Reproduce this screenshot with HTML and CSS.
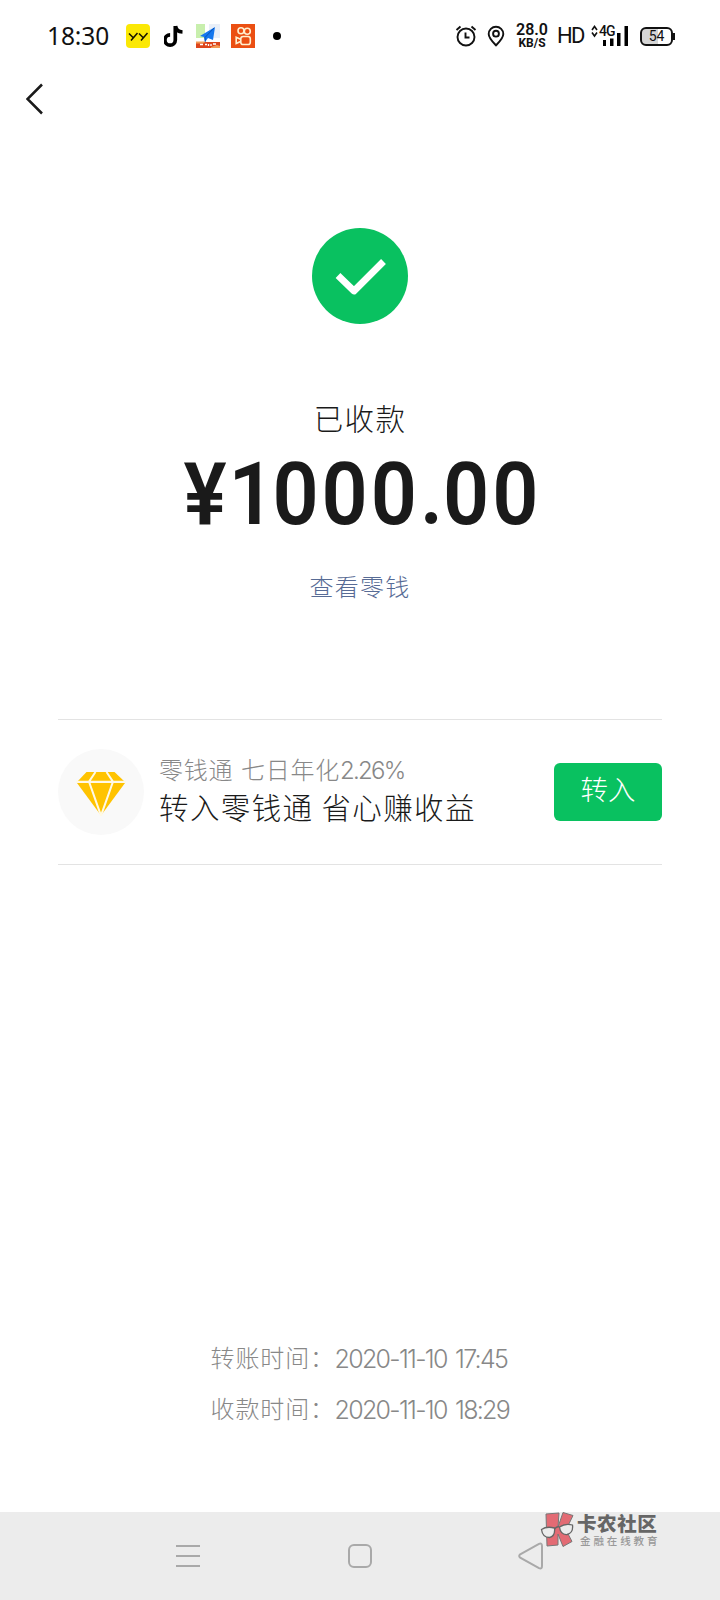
FILE: index.html
```html
<!DOCTYPE html>
<html lang="zh-CN">
<head>
<meta charset="utf-8">
<title>已收款</title>
<link rel="stylesheet" href="styles.css">
</head>
<body>
<div class="screen">
  <header class="status">
    <span class="clock">18:30</span>
    <div class="apps">
      <svg width="24" height="24" viewBox="0 0 24 24"><rect width="24" height="24" rx="4" fill="#fbe805"/><path d="M3 9.500l4 4M11.500 9l-6.500 7.500M13 9.500l4 4M21.500 9L15 16.500" fill="none" stroke="#151300" stroke-width="1.500"/></svg>
      <svg width="20" height="24" viewBox="0 0 20 24"><path d="M11.300 2v14a5.200 5.200 0 1 1-5.200-5.200M11.500 2c.5 4 3 5.800 7 6" fill="none" stroke="#000" stroke-width="3.700"/></svg>
      <svg width="24" height="24" viewBox="0 0 24 24"><path fill="#e9eff8" d="M0 0h24v24H0z"/><path fill="#c8efad" d="M0 0h9v15H0z"/><path fill="#fff" d="M9 0h4v18H9zM0 14h24v4H0z"/><path fill="#dd451c" d="M0 18h24v6H0z"/><path fill="#f39a54" d="M0 17.500h10l-3 2H0zM15 23l6-2 3 1v2h-9z"/><path fill="#1477ee" d="M19 3l-2 13-5-2-3 4-1-5-4-1z"/><path d="M18 4l-9 9.500.3 4" fill="none" stroke="#0752ba"/><path d="M4 20.500h3M9 20.500h2M12.500 20v2M15 20v2M17 20h3" stroke="#fff" stroke-width="1.300"/></svg>
      <svg width="24" height="24" viewBox="0 0 24 24"><path fill="#eb4f12" d="M0 0h24v24H0z"/><g fill="none" stroke="#fff0d0" stroke-width="1.600"><circle cx="10" cy="6.800" r="3"/><circle cx="16.300" cy="7.200" r="3"/><rect x="9.800" y="12.500" width="9.500" height="8" rx="2.300"/><path d="M9.500 15.200l-4.300-2v6.300l4.300-2"/></g></svg>
      <span class="dot"></span>
    </div>
    <div class="system">
      <svg width="22" height="22" viewBox="0 0 22 22" fill="none" stroke="#111" stroke-width="1.900"><circle cx="11" cy="12" r="8.500"/><path d="M10.500 7.500v5h4M1.500 5l4-3.500M16.500 1.500l4 3.500"/></svg>
      <svg class="pin" width="18" height="22" viewBox="0 0 18 22" fill="none" stroke="#111" stroke-width="1.900"><path d="M9 20.300C6 17.200 1.700 13.200 1.700 9a7.300 7.300 0 0 1 14.600 0c0 4.200-4.300 8.200-7.300 11.300z"/><circle cx="9" cy="8.700" r="2.900"/></svg>
      <div class="speed"><b>28.0</b><small>KB/S</small></div>
      <span class="hd">HD</span>
      <div class="signal">
        <svg width="38" height="22" viewBox="0 0 38 22"><path d="M1 5l2.500-3.500L6 5M1 7.500L3.500 11 6 7.500" fill="none" stroke="#111" stroke-width="1.600"/><path d="M12 15h3v6h-3zM19 13.500h3.500V21H19zM26 8h3.500v13H26zM33.500 1H37v20h-3.500z" fill="#000"/></svg>
        <span class="gen">4G</span>
      </div>
      <div class="battery"><span>54</span></div>
    </div>
  </header>
  <nav class="topbar">
    <svg width="18" height="32" viewBox="0 0 18 32"><path d="M16 1.500L1.500 16 16 30.500" fill="none" stroke="#1a1a1a" stroke-width="2.500"/></svg>
  </nav>
  <main class="main">
    <svg class="success" width="96" height="96" viewBox="0 0 96 96"><circle cx="48" cy="48" r="48" fill="#09c160"/><path d="M26 47.500L42 63 71.500 33.500" fill="none" stroke="#fff" stroke-width="6.800" stroke-linejoin="round"/></svg>
    <h1 class="state">已收款</h1>
    <div class="amount"><span class="yen">¥</span><span class="one">1</span>000<span class="point">.</span>00</div>
    <a class="balance">查看零钱</a>
    <section class="promo">
      <div class="gem"><svg width="50" height="44" viewBox="0 0 50 44"><path d="M10.500 0h28L49 10H1z" fill="#ffc300"/><path d="M1 11h48L25 43.500z" fill="#ffc300"/><path d="M0 9.700h50M19.500 0L13 9.700l12 34 12-34L30.500 0" fill="none" stroke="#fff9e5" stroke-width="2"/></svg></div>
      <div class="promo-text"><p class="rate">零钱通 七日年化<span class="num">2.26%</span></p><p class="pitch">转入零钱通 省心赚收益</p></div>
      <button class="transfer">转入</button>
    </section>
    <dl class="times">
      <div><dt>转账时间：</dt><dd>2020-11-10 17:45</dd></div>
      <div><dt>收款时间：</dt><dd>2020-11-10 18:29</dd></div>
    </dl>
  </main>
  <footer class="navbar">
    <svg width="24" height="24" viewBox="0 0 24 24"><path d="M0 2h24M0 12h24M0 22h24" stroke="#a9a9a9" stroke-width="2"/></svg>
    <svg class="home" width="24" height="24" viewBox="0 0 24 24"><rect x="1" y="1" width="22" height="22" rx="5" fill="none" stroke="#a9a9a9" stroke-width="2"/></svg>
    <svg class="back" width="26" height="28" viewBox="0 0 26 28"><path d="M2.200 12.300L21 1.800Q24 .5 24 4v20q0 3.500-3 2.200L2.200 15.700q-2-1.700 0-3.400z" fill="none" stroke="#a9a9a9" stroke-width="2"/></svg>
    <div class="brand">
      <svg width="36" height="38" viewBox="0 0 36 38"><path d="M6 2l13-1-1 14 5-14.500 10 3L26 18l6 11.500-9 5L18 22v11l-11 1z" fill="#e36b74" stroke="#777" stroke-width="1"/><path d="M1.500 17.500q5-3.500 13-1.500 1 8-5 9.500-7 0-8-8zM19.500 15q6-4 13-2 1 8-5.500 9.500-6.500.5-7.500-7.500z" fill="#ececec" stroke="#666" stroke-width="1.300"/><path d="M14.500 17q2.500-3 5-2" stroke="#666" stroke-width="1.300" fill="none"/></svg>
      <div><div class="brand-name">卡农社区</div><div class="brand-sub">金融在线教育</div></div>
    </div>
  </footer>
</div>
</body>
</html>
```
FILE: styles.css
```css
* { box-sizing: border-box; }
body, h1, p, dl, dd { margin: 0; }
body { background: #fff; color: #1a1a1a; font-family: "Noto Sans CJK SC", sans-serif; font-weight: 300; }
svg { display: block; flex: none; }
.screen { width: 720px; height: 1600px; display: flex; flex-direction: column; overflow: hidden; }
.status { height: 72px; padding: 0 46px 0 47px; display: flex; align-items: center; color: #111; }
.clock { width: 79px; font: 400 24.5px/36px "Noto Sans", sans-serif; letter-spacing: -.1px; }
.apps { display: flex; align-items: center; }
.apps svg:nth-child(2) { margin: 0 12px 0 14px; }
.apps svg:nth-child(4) { margin: 0 18px 0 11px; }
.dot { width: 8px; height: 8px; border-radius: 50%; background: #000; }
.system { display: flex; align-items: center; margin-left: auto; }
.pin { margin: 0 11px 0 10px; }
.speed { width: 32px; font-family: Roboto, sans-serif; font-weight: 700; text-align: center; }
.speed b, .speed small { display: block; white-space: nowrap; }
.speed b { font-size: 16px; line-height: 14px; font-weight: 600; }
.speed small { font-size: 12px; line-height: 12px; }
.hd { margin: 0 4px 0 8px; width: 31px; font: 400 22px/30px Roboto, sans-serif; letter-spacing: -1.800px; padding-left: 1px; }
.signal { position: relative; width: 38px; }
.gen { position: absolute; left: 8px; top: -1px; font: 500 14px/14px Roboto, sans-serif; letter-spacing: -1px; }
.battery { width: 33px; height: 19px; margin: 0 1px 0 11px; border: 2px solid #111; border-radius: 6px; background: linear-gradient(90deg, #d5d5d5 54%, #fff 54%); font: 400 14px/15px Roboto, sans-serif; text-align: center; position: relative; }
.battery::after { content: ""; position: absolute; right: -4px; top: 4px; width: 2px; height: 7px; background: #111; }
.topbar { height: 56px; padding: 11px 26px; }
.main { flex: 1; display: flex; flex-direction: column; align-items: center; padding-top: 100px; }
.state { margin-top: 71px; font-size: 29.500px; line-height: 44px; font-weight: 300; letter-spacing: 1.300px; }
.amount { margin: 12px 0 0 4px; height: 86px; font: 600 87px/86px Roboto, sans-serif; white-space: nowrap; letter-spacing: 3.200px; transform: scaleX(.93); }
.yen { letter-spacing: 2px; }
.one { letter-spacing: -2.500px; }
.point { letter-spacing: 0; }
.balance { margin-top: 31px; color: #576b95; font-size: 24px; line-height: 36px; letter-spacing: 1.200px; }
.promo { width: 604px; height: 146px; margin-top: 115px; border: solid #e3e3e3; border-width: 1px 0; display: flex; align-items: center; }
.gem { width: 86px; height: 86px; padding-top: 4px; flex: none; border-radius: 50%; background: #f9f9f9; display: flex; align-items: center; justify-content: center; }
.promo-text { margin-left: 15px; padding-bottom: 10px; white-space: nowrap; }
.rate { color: #888; font-size: 24px; line-height: 35px; letter-spacing: .7px; word-spacing: 2px; }
.num { font-family: Inter, sans-serif; letter-spacing: -1.700px; }
.pitch { font-size: 29.500px; line-height: 36px; letter-spacing: 1.400px; }
.transfer { width: 108px; height: 58px; margin-left: auto; padding: 0 0 7px; border: 0; border-radius: 6px; background: #09c160; color: #fff; font: 300 27.500px/51px "Noto Sans CJK SC", sans-serif; }
.times { margin-top: 467px; color: #888; }
.times div { display: flex; align-items: center; height: 51px; white-space: nowrap; }
.times dt { width: 124px; padding-bottom: 3px; font-size: 24px; letter-spacing: .9px; }
.times dd { width: 175px; padding-top: 2px; font: 300 25px/36px Inter, sans-serif; letter-spacing: -1.700px; word-spacing: 3px; }
.navbar { position: relative; height: 88px; background: #ececec; padding: 0 176px; display: flex; align-items: center; justify-content: space-between; }
.home { margin-left: 2px; }
.brand { position: absolute; left: 540px; top: 0; display: flex; color: #666; white-space: nowrap; }
.brand > div { margin-left: 1px; }
.brand-name { font-size: 19.500px; line-height: 21px; font-weight: 900; letter-spacing: .6px; }
.brand-sub { margin: 1px 0 0 3px; color: #999; font-size: 10.500px; line-height: 14px; font-weight: 500; letter-spacing: 2.900px; }
```
